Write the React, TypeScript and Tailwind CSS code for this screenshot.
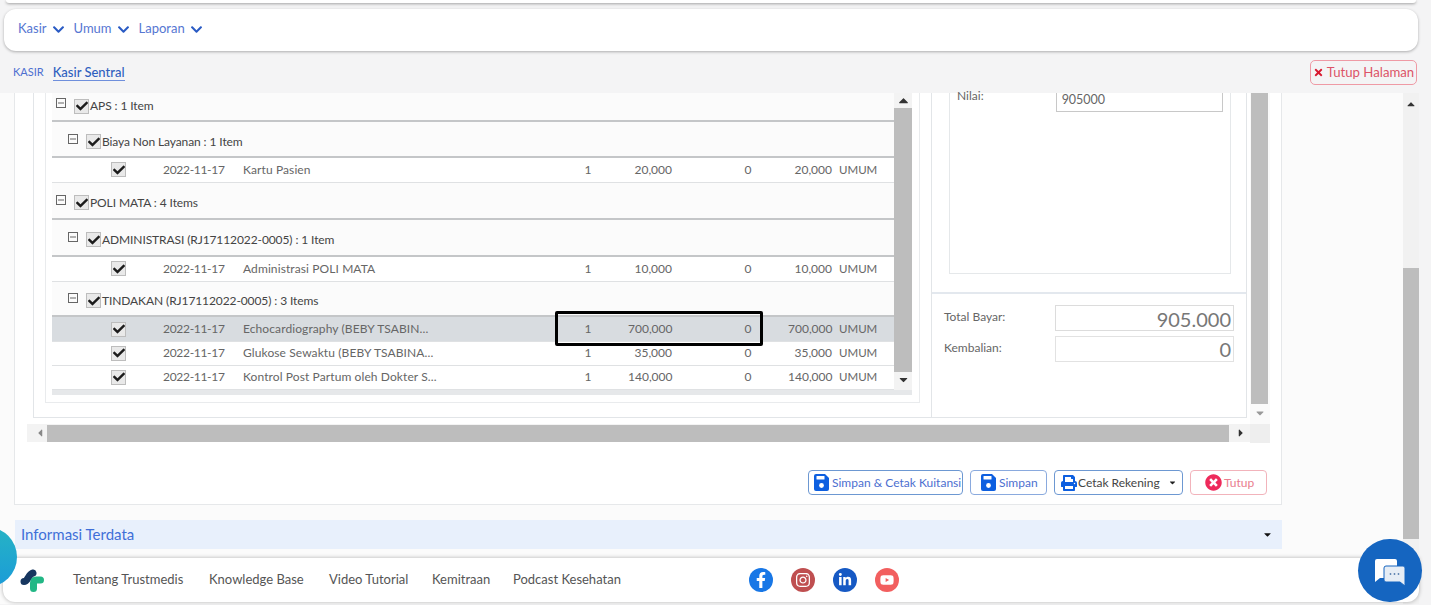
import { FaChevronDown, FaTimes, FaPrint, FaTimesCircle, FaFacebookF, FaInstagram, FaLinkedinIn, FaYoutube, FaCaretDown, FaCaretUp, FaCaretLeft, FaCaretRight, FaCheck } from 'react-icons/fa'

type Row =
  | { type: 'group'; label: string; indent: boolean; h: string; pt: string }
  | { type: 'item'; date: string; name: string; qty: string; price: string; disc: string; total: string; h: string; active?: boolean }

const rows: Row[] = [
  { type: 'group', label: 'APS : 1 Item', indent: false, h: 'h-[29px]', pt: 'pb-[1px]' },
  { type: 'group', label: 'Biaya Non Layanan : 1 Item', indent: true, h: 'h-[36px]', pt: 'pt-[5px]' },
  { type: 'item', date: '2022-11-17', name: 'Kartu Pasien', qty: '1', price: '20,000', disc: '0', total: '20,000', h: 'h-[25px]' },
  { type: 'group', label: 'POLI MATA : 4 Items', indent: false, h: 'h-[37px]', pt: 'pt-[4px]' },
  { type: 'group', label: 'ADMINISTRASI (RJ17112022-0005) : 1 Item', indent: true, h: 'h-[37px]', pt: 'pt-[4px]' },
  { type: 'item', date: '2022-11-17', name: 'Administrasi POLI MATA', qty: '1', price: '10,000', disc: '0', total: '10,000', h: 'h-[25px]' },
  { type: 'group', label: 'TINDAKAN (RJ17112022-0005) : 3 Items', indent: true, h: 'h-[35px]', pt: 'pt-[4px]' },
  { type: 'item', date: '2022-11-17', name: 'Echocardiography (BEBY TSABIN...', qty: '1', price: '700,000', disc: '0', total: '700,000', h: 'h-[25px]', active: true },
  { type: 'item', date: '2022-11-17', name: 'Glukose Sewaktu (BEBY TSABINA...', qty: '1', price: '35,000', disc: '0', total: '35,000', h: 'h-[24px]' },
  { type: 'item', date: '2022-11-17', name: 'Kontrol Post Partum oleh Dokter S...', qty: '1', price: '140,000', disc: '0', total: '140,000', h: 'h-[24px]' },
]

const footerLinks = [
  { label: 'Tentang Trustmedis', w: 'w-[136px]' },
  { label: 'Knowledge Base', w: 'w-[120px]' },
  { label: 'Video Tutorial', w: 'w-[103px]' },
  { label: 'Kemitraan', w: 'w-[81px]' },
  { label: 'Podcast Kesehatan', w: 'w-[128px]' },
]

function Check() {
  return (
    <span className="flex h-[15px] w-[15px] shrink-0 items-center justify-center border border-[#bdbdbd] bg-[#e9e9e9]">
      <FaCheck className="text-[12px] text-[#1c1c1c]" />
    </span>
  )
}

function Minus() {
  return (
    <svg width="10" height="10" viewBox="0 0 10 10" className="shrink-0">
      <rect x="0.5" y="0.5" width="9" height="9" fill="none" stroke="#666" />
      <path d="M2 5h6" stroke="#666" />
    </svg>
  )
}

function TreeRow({ row }: { row: Row }) {
  if (row.type === 'group') {
    return (
      <div className={`flex ${row.h} ${row.pt} items-center border-b-2 border-[#c4c6c8] text-[12px] tracking-[-0.1px] text-[#444] ${row.indent ? 'pl-[16px]' : 'pl-[4px]'}`}>
        <span className="-mt-[6px] mr-[8px]"><Minus /></span>
        <Check />
        <span className="ml-[1px]">{row.label}</span>
      </div>
    )
  }
  return (
    <div className={`relative grid ${row.h} grid-cols-[111px_80px_305px_80px_80px_80px_44px_1fr] items-center border-b border-[#dfe1e3] text-[12px] text-[#666] ${row.active ? 'bg-[#d8dce0]' : 'bg-white pb-[1px]'}`}>
      <span className="pl-[59px]"><Check /></span>
      <span className="tracking-[-0.3px]">{row.date}</span>
      <span className="whitespace-nowrap tracking-[0.1px]">{row.name}</span>
      <span className="text-center">{row.qty}</span>
      <span className="pr-[36px] text-right">{row.price}</span>
      <span className="text-center">{row.disc}</span>
      <span className="text-right">{row.total}</span>
      <span className="pl-[7px] text-[11.5px]">UMUM</span>
      {row.active && <div className="absolute left-[503px] top-[-6px] z-10 h-[35px] w-[208px] rounded-[2px] border-[3px] border-black" />}
    </div>
  )
}

function SaveIcon() {
  return (
    <svg width="15" height="17" viewBox="0 0 15 17" className="shrink-0">
      <path d="M2 0h9l4 4v11a2 2 0 0 1-2 2H2a2 2 0 0 1-2-2V2a2 2 0 0 1 2-2z" fill="#0d5fe0" />
      <rect x="2.5" y="2" width="8" height="3.5" rx="0.5" fill="#fff" />
      <circle cx="7.5" cy="11.5" r="2.4" fill="#fff" />
    </svg>
  )
}

function ActionButton({ icon, label, className, children }: { icon: React.ReactNode; label: string; className: string; children?: React.ReactNode }) {
  return (
    <button className={`flex h-[25px] items-center whitespace-nowrap rounded-[4px] border text-[12px] ${className}`}>
      {icon}
      {label}
      {children}
    </button>
  )
}

function ChatIcon() {
  return (
    <svg width="36" height="36" viewBox="0 0 36 36">
      <path d="M3 8a2 2 0 0 1 2-2h18a2 2 0 0 1 2 2v15a2 2 0 0 1-2 2H8l-5 4z" fill="#fff" />
      <path d="M12 15a2 2 0 0 1 2-2h17a2 2 0 0 1 2 2v18l-5-4H14a2 2 0 0 1-2-2z" fill="#e6edf5" stroke="#1565c0" strokeWidth="1" />
      <circle cx="18.5" cy="21" r="0.9" fill="#5a7fae" />
      <circle cx="22.5" cy="21" r="0.9" fill="#5a7fae" />
      <circle cx="26.5" cy="21" r="0.9" fill="#5a7fae" />
    </svg>
  )
}

function Logo() {
  return (
    <svg width="24" height="24" viewBox="0 0 24 24" className="shrink-0">
      <path d="M4 13.5C8 13.5 8.500 6 13 5" fill="none" stroke="#16365f" strokeWidth="7" strokeLinecap="round" />
      <path d="M13.500 20.500V15Q13.500 12 16.500 12H20.500" fill="none" stroke="#22b785" strokeWidth="7" strokeLinecap="round" />
    </svg>
  )
}

export default function App() {
  return (
    <div className="relative h-[605px] w-[1431px] overflow-hidden bg-[#f4f4f5] font-['Lato','Noto_Sans',sans-serif]">
      {/* Top bars */}
      <div className="ml-[6px] h-[3px] w-[1410px] rounded-b-xl bg-white shadow-[0_1px_3px_rgba(0,0,0,0.35)]" />
      <div className="ml-[4px] mt-[6px] flex h-[42px] w-[1414px] items-center gap-[9px] rounded-xl bg-white pb-[2px] pl-[14px] text-[13px] text-[#5676d2] shadow-[0_1px_3px_rgba(0,0,0,0.3)]">
        {['Kasir', 'Umum', 'Laporan'].map(item => (
          <span key={item} className="flex items-center gap-[5px]">
            {item}
            <FaChevronDown className="text-[13px] text-[#2a5bc4]" />
          </span>
        ))}
      </div>

      {/* Breadcrumb */}
      <div className="flex h-[42px] items-center pl-[13px] pr-[14px] pt-[1px]">
        <span className="text-[11px] text-[#4d6fd0]">KASIR</span>
        <span className="ml-[9px] border-b border-[#6f8fdc] text-[13px] font-medium leading-[15px] text-[#2f5fbf]">Kasir Sentral</span>
        <button className="ml-auto flex h-[25px] w-[107px] items-center justify-center gap-[3px] whitespace-nowrap rounded-[5px] border border-[#ef9aa5] text-[13.2px] text-[#dc5468]">
          <FaTimes className="text-[11px] text-[#d8182f]" />
          Tutup Halaman
        </button>
      </div>

      {/* Body */}
      <div className="flex h-[511px] bg-white">
        <div className="w-[1403px] bg-[#fbfbfb]">
          <div className="ml-[14px] flex h-[412px] w-[1268px] flex-col border-x border-b border-[#e6e8ea] bg-white">
            <div className="ml-[12px] flex h-[331px] w-[1243px]">
              {/* Viewport */}
              <div className="h-full w-[1223px] pl-[6px]">
                <div className="flex h-[325px] w-[1214px] border-x border-b border-[#e2e5e8]">
                  <div className="w-[897px] pl-[11px]">
                    <div className="h-[310px] w-[875px] border-x border-b border-[#e9ebed] bg-white pl-[6px]">
                      <div className="flex h-[297px]">
                        <div className="w-[842px] bg-[#fbfbfb]">
                          {rows.map((row, i) => <TreeRow key={i} row={row} />)}
                        </div>
                        <div className="flex h-full w-[18px] flex-col items-center bg-[#f3f3f3]">
                          <FaCaretUp className="h-[15px] text-[13px] text-[#333]" />
                          <div className="h-[264px] w-full bg-[#bdbdbd]" />
                          <FaCaretDown className="mt-[1px] text-[13px] text-[#333]" />
                        </div>
                      </div>
                      <div className="h-[5px] w-[860px] bg-[#e6e8ea]" />
                    </div>
                  </div>
                  {/* Payment panel */}
                  <div className="w-[315px] border-l border-[#e2e5e8] bg-white">
                    <div className="h-[201px] border-b-2 border-[#e3e8ee] px-[17px]">
                      <div className="flex h-[181px] w-[282px] border-x border-b border-[#e5e8ea] px-[7px] text-[12px] text-[#666]">
                        <span className="mt-[-6px] w-[99px]">Nilai:</span>
                        <span className="h-[19px] w-[168px] border-x border-b border-[#c8c8c8] pl-[5px] text-[12.5px] leading-[13px]">905000</span>
                      </div>
                    </div>
                    <div className="grid grid-cols-[111px_179px] gap-y-[5px] pl-[12px] pt-[11px] text-[12px] text-[#666]">
                      <span className="pt-[3px]">Total Bayar:</span>
                      <span className="h-[26px] border border-[#dcdcdc] pr-[2px] text-right text-[20px] leading-[26px] text-[#777]">905.000</span>
                      <span className="pt-[3px]">Kembalian:</span>
                      <span className="h-[26px] border border-[#e2e2e2] pr-[2px] text-right text-[20px] leading-[25px] text-[#777]">0</span>
                    </div>
                  </div>
                </div>
              </div>
              {/* Vertical scrollbar */}
              <div className="flex w-[20px] flex-col items-center bg-[#fafafa] pr-[1px]">
                <div className="h-[311px] w-[17px] bg-[#bdbdbd]" />
                <FaCaretDown className="mt-[3px] text-[12px] text-[#999]" />
              </div>
            </div>
            {/* Horizontal scrollbar */}
            <div className="ml-[12px] flex h-[19px] w-[1243px]">
              <div className="flex h-[18px] w-[1223px] items-center bg-[#f3f3f3]">
                <FaCaretLeft className="ml-[6px] w-[14px] text-[12px] text-[#888]" />
                <div className="h-[17px] w-[1182px] bg-[#bdbdbd]" />
                <FaCaretRight className="ml-[6px] text-[12px] text-[#333]" />
              </div>
              <div className="h-[19px] w-[20px] bg-[#eeeeee]" />
            </div>
            {/* Actions */}
            <div className="flex justify-end gap-[7px] pr-[14px] pt-[27px]">
              <ActionButton
                icon={<span className="mr-[3px]"><SaveIcon /></span>}
                label="Simpan & Cetak Kuitansi"
                className="w-[155px] border-[#6d98d2] pl-[5px] text-[#4d6fd0]"
              />
              <ActionButton
                icon={<span className="mr-[3px]"><SaveIcon /></span>}
                label="Simpan"
                className="w-[77px] border-[#8aaade] pl-[10px] text-[#4d6fd0]"
              />
              <ActionButton
                icon={<FaPrint className="mr-[1px] text-[16px] text-[#0d5fe0]" />}
                label="Cetak Rekening"
                className="w-[129px] border-[#6d98d2] pl-[6px] text-[#444]"
              >
                <FaCaretDown className="ml-[8px] text-[9px] text-[#222]" />
              </ActionButton>
              <ActionButton
                icon={<FaTimesCircle className="mr-[2px] text-[17px] text-[#ee2a5b]" />}
                label="Tutup"
                className="w-[77px] border-[#f2b3bb] pl-[14px] text-[#ea7d8e]"
              />
            </div>
          </div>
          <div className="ml-[15px] mt-[15px] flex h-[29px] w-[1267px] items-center justify-between bg-[#e8f0fc] pb-[1px] pl-[6px] pr-[9px] text-[15px] text-[#3f6fd8]">
            Informasi Terdata
            <FaCaretDown className="text-[11px] text-[#111]" />
          </div>
        </div>

        {/* Page scrollbar */}
        <div className="flex w-[16px] flex-col items-center bg-[#f1f1f1]">
          <FaCaretUp className="mt-[5px] text-[12px] text-[#333]" />
          <div className="mt-[158px] h-[271px] w-full bg-[#bdbdbd]" />
        </div>
        <div className="flex-1 bg-[#f4f4f5]" />
      </div>

      {/* Footer overlay */}
      <div className="absolute left-[3px] top-[558px] flex h-[44px] w-[1416px] items-center rounded-b-xl bg-white pl-[17px] text-[13px] text-[#555] shadow-[0_0_4px_rgba(0,0,0,0.3)]">
        <Logo />
        <div className="ml-[29px] flex">
          {footerLinks.map(link => <span key={link.label} className={link.w}>{link.label}</span>)}
        </div>
        <div className="ml-[108px] flex gap-[18px]">
          <span className="flex h-[24px] w-[24px] items-center justify-center rounded-full bg-[#1877e6] text-[16px] text-white"><FaFacebookF /></span>
          <span className="flex h-[24px] w-[24px] items-center justify-center rounded-full bg-[#bf4f50] text-[16px] text-white"><FaInstagram /></span>
          <span className="flex h-[24px] w-[24px] items-center justify-center rounded-full bg-[#1659c4] text-[14px] text-white"><FaLinkedinIn /></span>
          <span className="flex h-[24px] w-[24px] items-center justify-center rounded-full bg-[#f25f5f] text-[14px] text-white"><FaYoutube /></span>
        </div>
      </div>

      {/* Floating bubbles */}
      <div className="absolute left-[-43px] top-[527px] h-[60px] w-[60px] rounded-full bg-gradient-to-b from-[#27b3c4] to-[#1c9bd8]" />
      <div className="absolute left-[1358px] top-[539px] flex h-[63px] w-[64px] items-center justify-center rounded-full bg-[#1565c0]">
        <ChatIcon />
      </div>
    </div>
  )
}
